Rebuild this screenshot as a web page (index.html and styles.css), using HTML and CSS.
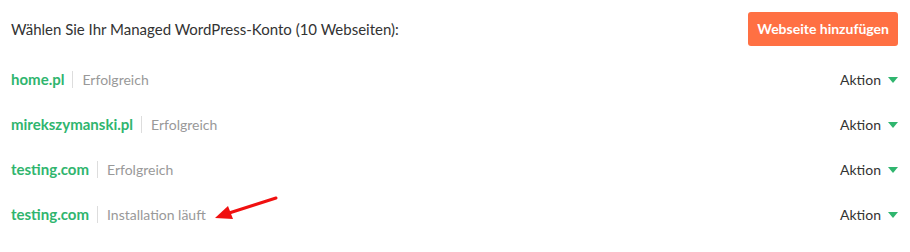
FILE: index.html
```html
<!DOCTYPE html>
<html>
<head>
    <title>Managed WordPress</title>
    <link rel="stylesheet" href="styles.css">
</head>
<body>
    <div class="panel">
        <div class="panel-head">
            <div class="title">Wählen Sie Ihr Managed WordPress-Konto (10 Webseiten):</div>
            <button class="add-btn">Webseite hinzufügen</button>
        </div>

        <div class="site">
            <div class="site-info">
                <a href="#" class="domain">home.pl</a>
                <span class="status">Erfolgreich</span>
            </div>
            <div class="action">Aktion <span class="caret"></span></div>
        </div>
        <div class="site">
            <div class="site-info">
                <a href="#" class="domain">mirekszymanski.pl</a>
                <span class="status">Erfolgreich</span>
            </div>
            <div class="action">Aktion <span class="caret"></span></div>
        </div>
        <div class="site">
            <div class="site-info">
                <a href="#" class="domain">testing.com</a>
                <span class="status">Erfolgreich</span>
            </div>
            <div class="action">Aktion <span class="caret"></span></div>
        </div>
        <div class="site">
            <div class="site-info">
                <a href="#" class="domain">testing.com</a>
                <span class="status">Installation läuft</span>
                <svg class="pointer" width="70" height="30" viewBox="0 0 70 30">
                    <line x1="64" y1="3" x2="14" y2="19" stroke="#f01010" stroke-width="3" stroke-linecap="round"/>
                    <polygon points="3,23 16,11 21,24" fill="#f01010"/>
                </svg>
            </div>
            <div class="action">Aktion <span class="caret"></span></div>
        </div>
    </div>
</body>
</html>
```

FILE: styles.css
```css
body {
    margin: 0;
    padding: 0;
    background-color: #fff;
    font-family: Lato, "Open Sans", sans-serif;
    color: #333;
}

.panel {
    width: 910px;
    height: 252px;
    padding: 0 12px 0 11px;
    box-sizing: border-box;
}

.panel-head {
    display: flex;
    justify-content: space-between;
    align-items: center;
    height: 57px;
}

.title {
    font-size: 15px;
    color: #333;
}

.add-btn {
    height: 34px;
    padding: 0 9px;
    background-color: #ff7043;
    color: #fff;
    border: none;
    border-radius: 3px;
    font-family: Lato, sans-serif;
    font-size: 14px;
    font-weight: bold;
    cursor: pointer;
}

.site {
    display: flex;
    justify-content: space-between;
    align-items: center;
    height: 45px;
}

.site-info {
    display: flex;
    align-items: center;
    position: relative;
}

.domain {
    font-size: 15px;
    font-weight: bold;
    color: #2fb56e;
    text-decoration: none;
    padding-right: 8px;
    border-right: 1px solid #ddd;
    line-height: 17px;
}

.status {
    font-size: 14px;
    color: #999;
    padding-left: 9px;
}

.pointer {
    position: absolute;
    left: 201px;
    top: -11px;
}

.action {
    font-size: 14px;
    color: #333;
    display: flex;
    align-items: center;
}

.caret {
    display: inline-block;
    width: 0;
    height: 0;
    margin-left: 7px;
    border-left: 5px solid transparent;
    border-right: 5px solid transparent;
    border-top: 6px solid #2fb56e;
}
```
